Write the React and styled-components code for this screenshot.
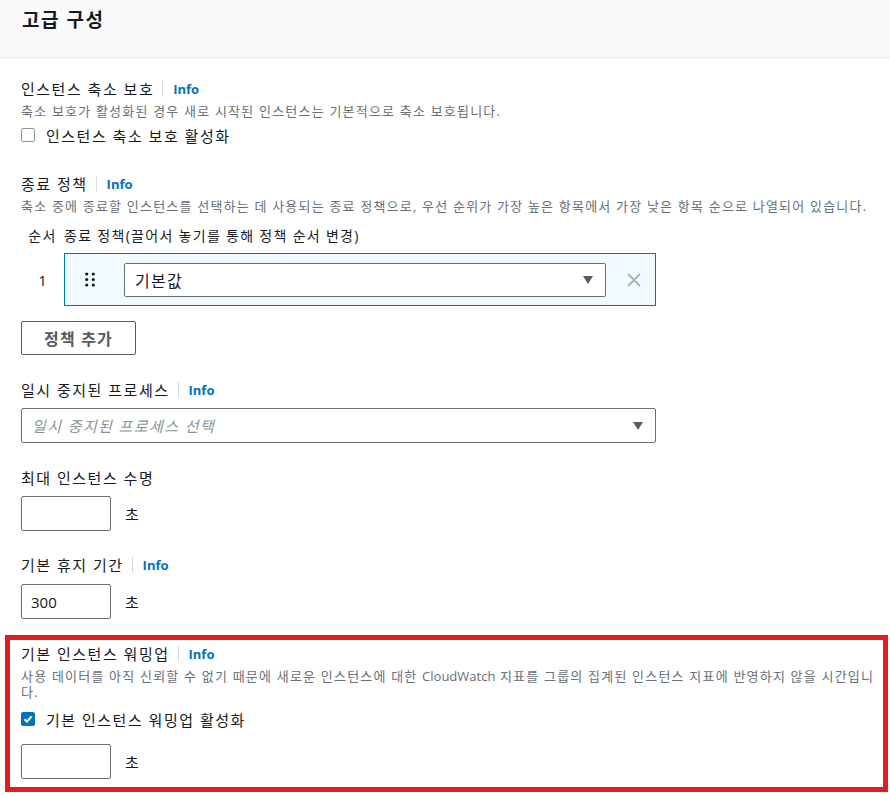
import React from 'react';
import styled, { createGlobalStyle } from 'styled-components';

const GlobalStyle = createGlobalStyle`
  body {
    margin: 0;
    background: #ffffff;
    font-family: "Open Sans", "Noto Sans CJK KR", sans-serif;
    color: #16191f;
  }
`;

const Header = styled.div`
  background: #fafafa;
  border-bottom: 1px solid #eaeded;
  height: 57px;
  padding: 0 22px;
  display: flex;
  align-items: flex-start;
`;

const Title = styled.h2`
  margin: 7px 0 0;
  font-size: 19px;
  font-weight: 700;
  letter-spacing: 1.5px;
  line-height: 26px;
  color: #16191f;
`;

const Body = styled.div`
  padding: 20px 14px 0 21px;
`;

const Field = styled.div`
  margin-bottom: ${(p) => p.$gap ?? 24}px;
`;

const LabelRow = styled.div`
  display: flex;
  align-items: center;
  height: 22px;
`;

const Label = styled.span`
  font-size: 15px;
  letter-spacing: 1.5px;
  line-height: 22px;
  color: #16191f;
`;

const Divider = styled.span`
  width: 1px;
  height: 16px;
  background: #d5dbdb;
  margin: 0 10px 0 8px;
`;

const InfoLink = styled.a`
  font-size: 13px;
  font-weight: 700;
  color: #0073bb;
  text-decoration: none;
`;

const Desc = styled.div`
  margin-top: 3px;
  font-size: 13px;
  letter-spacing: 1.2px;
  line-height: 16px;
  color: #687078;
`;

const Latin = styled.span`
  letter-spacing: 0;
`;

const CheckRow = styled.label`
  display: flex;
  align-items: center;
  gap: 11px;
  height: 22px;
  margin-top: ${(p) => p.$top ?? 8}px;
  font-size: 15px;
  letter-spacing: 1.5px;
  color: #16191f;
`;

const Box = styled.span`
  width: 14px;
  height: 14px;
  border-radius: 2px;
  box-sizing: border-box;
  border: 1px solid ${(p) => (p.$checked ? '#0073bb' : '#879596')};
  background: ${(p) => (p.$checked ? '#0073bb' : '#ffffff')};
  display: flex;
  align-items: center;
  justify-content: center;
`;

const ColHeader = styled.div`
  display: flex;
  align-items: center;
  height: 20px;
  margin-top: 11px;
  font-size: 14px;
  letter-spacing: 1.3px;
  color: #16191f;
`;

const OrderCol = styled.div`
  width: 43px;
  flex: none;
  text-align: center;
  font-size: ${(p) => p.$size ?? 14}px;
`;

const PolicyRow = styled.div`
  display: flex;
  align-items: center;
  margin-top: 8px;
`;

const PolicyBox = styled.div`
  width: 592px;
  height: 53px;
  box-sizing: border-box;
  border: 1px solid #0073bb;
  background: #f1faff;
  display: flex;
  align-items: center;
  padding: 0 13px 0 20px;
`;

const Handle = styled.div`
  width: 39px;
  flex: none;
  display: flex;
`;

const Select = styled.div`
  box-sizing: border-box;
  width: ${(p) => p.$w}px;
  height: ${(p) => p.$h ?? 34}px;
  border: 1px solid #687078;
  border-radius: 2px;
  background: #ffffff;
  display: flex;
  align-items: center;
  justify-content: space-between;
  padding: 0 12px 0 10px;
  font-size: ${(p) => (p.$placeholder ? 15 : 16)}px;
  letter-spacing: ${(p) => (p.$placeholder ? 1.4 : 1.3)}px;
  color: ${(p) => (p.$placeholder ? '#879596' : '#16191f')};
  font-style: ${(p) => (p.$placeholder ? 'italic' : 'normal')};
`;

const Caret = styled.span`
  width: 0;
  height: 0;
  border-left: 5.5px solid transparent;
  border-right: 5.5px solid transparent;
  border-top: 8px solid #545b64;
`;

const RemoveBtn = styled.div`
  margin-left: auto;
  display: flex;
`;

const Button = styled.button`
  margin-top: 15px;
  height: 34px;
  width: 115px;
  border: 1px solid #545b64;
  border-radius: 2px;
  background: #ffffff;
  color: #545b64;
  font-family: inherit;
  font-size: 16px;
  letter-spacing: 1.2px;
  font-weight: 700;
  padding: 0;
`;

const InputRow = styled.div`
  display: flex;
  align-items: center;
  gap: 14px;
  margin-top: ${(p) => p.$top ?? 7}px;
`;

const Input = styled.div`
  box-sizing: border-box;
  width: 90px;
  height: 35px;
  border: 1px solid #687078;
  border-radius: 2px;
  padding: 0 9px;
  display: flex;
  align-items: center;
  font-size: 15px;
  color: #16191f;
`;

const Unit = styled.span`
  font-size: 15px;
  color: #16191f;
`;

const Highlight = styled.div`
  margin: 0 -12px 0 -16px;
  border: 5px solid #e31c1f;
  padding: 3px 4px 8px 11px;
`;

const LabelWithInfo = ({ children, info }) => (
  <LabelRow>
    <Label>{children}</Label>
    {info && (
      <>
        <Divider />
        <InfoLink href="#">Info</InfoLink>
      </>
    )}
  </LabelRow>
);

const Check = () => (
  <svg width="10" height="10" viewBox="0 0 10 10">
    <path d="M1.5 5.2 L4 7.6 L8.6 2.4" fill="none" stroke="#fff" strokeWidth="2" />
  </svg>
);

export default function App() {
  return (
    <>
      <GlobalStyle />
      <Header>
        <Title>고급 구성</Title>
      </Header>
      <Body>
        <Field $gap={27}>
          <LabelWithInfo info>인스턴스 축소 보호</LabelWithInfo>
          <Desc>축소 보호가 활성화된 경우 새로 시작된 인스턴스는 기본적으로 축소 보호됩니다.</Desc>
          <CheckRow $top={5}>
            <Box />
            인스턴스 축소 보호 활성화
          </CheckRow>
        </Field>

        <Field>
          <LabelWithInfo info>종료 정책</LabelWithInfo>
          <Desc>
            축소 중에 종료할 인스턴스를 선택하는 데 사용되는 종료 정책으로, 우선 순위가 가장 높은 항목에서 가장 낮은 항목 순으로 나열되어 있습니다.
          </Desc>
          <ColHeader>
            <OrderCol>순서</OrderCol>
            종료 정책(끌어서 놓기를 통해 정책 순서 변경)
          </ColHeader>
          <PolicyRow>
            <OrderCol $size={15}>1</OrderCol>
            <PolicyBox>
              <Handle>
                <svg width="10" height="15" viewBox="0 0 10 15">
                  {[0, 1, 2].map((r) =>
                    [0, 1].map((c) => (
                      <circle key={`${r}-${c}`} cx={1.7 + c * 6.6} cy={2 + r * 5.5} r="1.6" fill="#16191f" />
                    ))
                  )}
                </svg>
              </Handle>
              <Select $w={482}>
                기본값
                <Caret />
              </Select>
              <RemoveBtn>
                <svg width="16" height="16" viewBox="0 0 16 16">
                  <path d="M2 2 L14 14 M14 2 L2 14" stroke="#aab7b8" strokeWidth="2" />
                </svg>
              </RemoveBtn>
            </PolicyBox>
          </PolicyRow>
          <Button>정책 추가</Button>
        </Field>

        <Field>
          <LabelWithInfo info>일시 중지된 프로세스</LabelWithInfo>
          <InputRow>
            <Select $w={635} $h={35} $placeholder>
              일시 중지된 프로세스 선택
              <Caret />
            </Select>
          </InputRow>
        </Field>

        <Field $gap={23}>
          <LabelWithInfo>최대 인스턴스 수명</LabelWithInfo>
          <InputRow>
            <Input />
            <Unit>초</Unit>
          </InputRow>
        </Field>

        <Field $gap={16}>
          <LabelWithInfo info>기본 휴지 기간</LabelWithInfo>
          <InputRow $top={8}>
            <Input>300</Input>
            <Unit>초</Unit>
          </InputRow>
        </Field>

        <Highlight>
          <LabelWithInfo info>기본 인스턴스 워밍업</LabelWithInfo>
          <Desc>
            사용 데이터를 아직 신뢰할 수 없기 때문에 새로운 인스턴스에 대한 <Latin>CloudWatch</Latin> 지표를 그룹의 집계된 인스턴스 지표에 반영하지 않을 시간입니다.
          </Desc>
          <CheckRow $top={8}>
            <Box $checked>
              <Check />
            </Box>
            기본 인스턴스 워밍업 활성화
          </CheckRow>
          <InputRow $top={14}>
            <Input />
            <Unit>초</Unit>
          </InputRow>
        </Highlight>
      </Body>
    </>
  );
}
